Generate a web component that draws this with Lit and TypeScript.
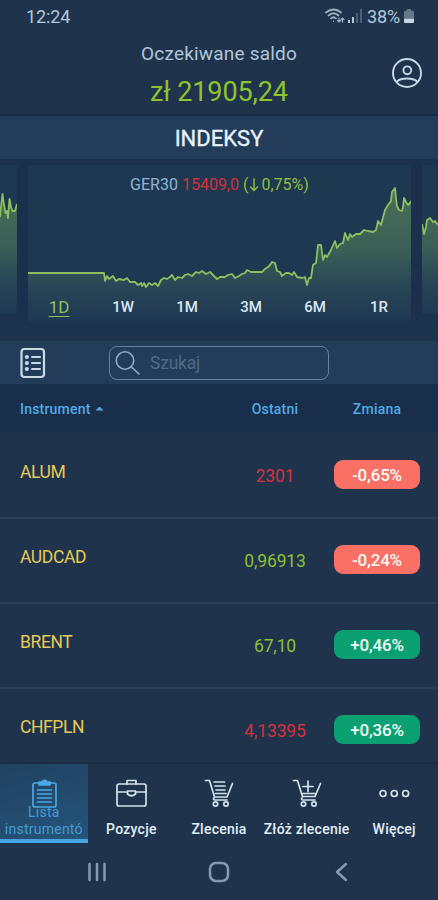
import { LitElement, html, css, svg } from "lit";
import { customElement } from "lit/decorators.js";
import { classMap } from "lit/directives/class-map.js";

interface Quote { name: string; last: string; rising: boolean; change: string; up: boolean; }

const QUOTES: Quote[] = [
  { name: "ALUM", last: "2301", rising: false, change: "-0,65%", up: false },
  { name: "AUDCAD", last: "0,96913", rising: true, change: "-0,24%", up: false },
  { name: "BRENT", last: "67,10", rising: true, change: "+0,46%", up: true },
  { name: "CHFPLN", last: "4,13395", rising: false, change: "+0,36%", up: true },
];

const PERIODS = ["1D", "1W", "1M", "3M", "6M", "1R"];

const LEFT_LINE = "0,52 1,42 2.5,29 4,40 5.500,48 7,46 8,53 9.5,34 11,42 12.500,46 15,46 17,39";
const MAIN_LINE =
  "0,108 76,108 77,116 79,111 81,114 85,111 88,116 91,114 96,115 99,113 102,117 107,117 110,120 113,118 114,121 116,118 118,122 121,118 124,120 127,118 130,121 133,115 136,113 139,114 142,112 144,110 147,115 150,112 154,113 157,110 160,109 164,111 168,107 171,108 174,106 178,109 182,107 186,111 189,114 192,112 197,112 200,110 204,109 207,113 211,111 214,109 217,108 219,105 223,107 228,107 234,107 237,104 240,102 242,100 244,97 247,98 249,106 252,107 254,111 258,108 261,108 264,110 266,107 269,112 274,113 277,112 279,120 281,113 283,113 285,100 288,98 290,80 293,80 295,95 297,90 299,92 303,85 307,76 309,83 312,79 315,78 317,68 320,75 322,69 324,72 328,69 332,69 336,65 340,66 345,67 348,65 350,56 353,60 357,45 360,40 363,36 364,27 367,23 368,33 369,41 371,45 374,46 375,42 376,33 378,37 380,40 382,38 383,36";
const RIGHT_LINE = "0,59 2,69 4,62 5,55 8,53 11,57 13,56 16,60";

const stroke = (body: unknown, cls: string, box: string) =>
  html`<svg class=${cls} viewBox=${box} fill="none" stroke="currentColor" stroke-linecap="round" stroke-linejoin="round">${body}</svg>`;

@customElement("area-chart")
export class AreaChart extends LitElement {
  static properties = {
    points: { type: String },
    width: { type: Number },
    height: { type: Number },
  };
  declare points: string;
  declare width: number;
  declare height: number;

  static styles = css`
    :host, svg { display: block; }
    polyline { fill: none; stroke: #8dbf60; stroke-width: 1.8; stroke-linejoin: round; }
  `;

  render() {
    const w = this.width, h = this.height;
    return html`<svg width=${w} height=${h} viewBox="0 0 ${w} ${h}">
      <defs><linearGradient id="fade" gradientUnits="userSpaceOnUse" x1="0" y1="20" x2="0" y2=${h}>
        <stop offset="0" stop-color="#79a85d" stop-opacity=".5"></stop>
        <stop offset=".5" stop-color="#5c8b5c" stop-opacity=".45"></stop>
        <stop offset="1" stop-color="#335f66" stop-opacity=".02"></stop>
      </linearGradient></defs>
      <polygon points="0,${h} ${this.points} ${w},${h}" fill="url(#fade)"></polygon>
      <polyline points=${this.points}></polyline>
    </svg>`;
  }
}

@customElement("app-root")
export class AppRoot extends LitElement {
  static styles = css`
    :host { display: flex; flex-direction: column; width: 438px; height: 900px; overflow: hidden; background: #1f344c; color: #dce9f5; font-family: Roboto, "Noto Sans", sans-serif; }
    * { box-sizing: border-box; }
    svg { display: block; flex: none; }
    .status { height: 34px; flex: none; display: flex; align-items: center; justify-content: space-between; padding: 0 23px 2px 26px; font-size: 18px; letter-spacing: -.1px; color: #b5c6d8; }
    .signals { display: flex; align-items: center; }
    .wifi { width: 20px; height: 16px; margin-right: 3px; }
    .bars { width: 14px; height: 14px; margin-right: 5px; }
    .battery { width: 12px; height: 16px; margin-left: 3px; }
    .balance { height: 82px; flex: none; display: grid; grid-template-columns: 64px 1fr 64px; border-bottom: 2px solid #182a43; }
    .sum { text-align: center; padding-top: 8px; }
    .label { font-size: 19px; line-height: 24px; color: #b1c5d9; letter-spacing: .2px; }
    .amount { font-size: 27px; line-height: 32px; margin-top: 10px; color: #8fc32d; letter-spacing: -.1px; }
    .user { width: 32px; height: 32px; margin: 23px 0 0 17px; color: #c6d7e8; stroke-width: 1.9; }
    .title { height: 43px; flex: none; display: flex; align-items: center; justify-content: center; font-size: 22px; -webkit-text-stroke: .35px; color: #e8f2fb; background: #233c5a; padding-top: 2px; }
    .carousel { height: 182px; flex: none; display: grid; grid-template-columns: 17px 383px 16px; column-gap: 11px; padding-top: 6px; background: linear-gradient(#1b304c 150px, #1e334c 176px); }
    .card { height: 156px; background: #1f3852; display: grid; }
    .side { height: 149px; }
    .card > * { grid-area: 1 / 1; }
    .info { display: flex; flex-direction: column; justify-content: space-between; padding: 10px 0 4px; }
    .quote { text-align: center; font-size: 16px; line-height: 20px; color: #8fb4d6; }
    .down { color: #d2323a; }
    .rise { color: #8ebe38; }
    .arrow { display: inline-block; width: 10px; height: 14px; vertical-align: -2px; margin: 0 2px 0 1px; stroke-width: 1.5; }
    .periods { display: grid; grid-template-columns: repeat(6, 64px); margin-left: -1px; text-align: center; font-size: 15px; line-height: 20px; font-weight: 500; color: #d7e8f4; }
    .current { color: #8cc263; font-size: 17px; font-weight: 400; text-decoration: underline; text-underline-offset: 3px; text-decoration-thickness: 1px; }
    .tools { height: 43px; flex: none; display: flex; align-items: center; gap: 63px; padding-left: 20px; background: #233c5a; }
    .list { width: 26px; height: 32px; color: #cad9e8; }
    .search { width: 220px; height: 34px; border: 1.5px solid #64809c; border-radius: 8px; display: flex; align-items: center; gap: 10px; padding-left: 5px; color: #506a86; font-size: 17.5px; letter-spacing: -.2px; }
    .lens { width: 25px; height: 26px; color: #91abc5; stroke-width: 1.6; }
    .columns, .row { display: grid; grid-template-columns: 196px 118px 86px; padding-left: 20px; padding-right: 18px; }
    .columns { height: 48px; flex: none; align-items: center; background: #192e4a; color: #50abe3; font-size: 14px; font-weight: 500; letter-spacing: .2px; text-align: center; padding-top: 1px; }
    .sorted { display: flex; align-items: center; gap: 5px; }
    .tri { width: 8px; height: 4px; background: currentColor; clip-path: polygon(50% 0, 100% 100%, 0 100%); }
    .rows { height: 330px; flex: none; overflow: hidden; }
    .row { height: 85px; border-bottom: 2px solid #2a415a; align-items: start; text-align: center; font-size: 17.5px; line-height: 24px; padding-top: 26px; }
    .row:first-child { height: 87px; padding-top: 28px; }
    .name { color: #e5c957; text-align: left; letter-spacing: -.4px; }
    .last { padding-top: 4px; letter-spacing: -.15px; }
    .pill { height: 29px; line-height: 30px; border-radius: 9px; color: #f2fbf8; background: #0ba071; font-weight: 500; font-size: 17px; letter-spacing: -.2px; }
    .loss { background: #fb7064; }
    .nav { height: 81px; flex: none; display: grid; grid-template-columns: repeat(5, 1fr); border-top: 2px solid #192c44; }
    .tab { display: flex; flex-direction: column; align-items: center; justify-content: space-between; padding: 15px 0 5px; white-space: nowrap; text-align: center; font-size: 14px; letter-spacing: .25px; font-weight: 500; line-height: 17px; color: #e2eef8; }
    .tab svg { width: 32px; height: 30px; color: #d4e2ed; stroke-width: 1.7; }
    .active { background: linear-gradient(160deg, #21425f, #25547c); border-bottom: 4px solid #48a4df; padding-bottom: 1px; color: #459bd3; font-weight: 400; }
    .tab.active svg { color: #4ba7e3; margin-bottom: -6px; }
    .system { flex: 1; display: flex; justify-content: center; padding-top: 18px; gap: 100px; color: #8999b0; }
    .system svg { width: 22px; height: 22px; stroke-width: 2.5; }
  `;

  render() {
    return html`
      <div class="status"><span>12:24</span>
        <div class="signals">
          <svg class="wifi" viewBox="0 0 20 16" fill="none" stroke="#9fb2c5" stroke-width="1.7" stroke-linecap="round"><path d="M1 4.500Q8.500-1.500 16 4.500M3.500 7.500Q8.500 3 13.500 7.500M6 10.500Q8.500 8 11 10.500"></path><path d="M8.500 13v.5M14 10v4m-1.500-1.500L14 14l1.500-1.500M17.500 14v-4M16 11.500l1.500-1.500 1.500 1.500" stroke-width="1.200"></path></svg>
          <svg class="bars" viewBox="0 0 14 14"><path d="M0 11h2v3H0zM4 8h2v6H4z" fill="#b5c6d8"></path><path d="M8 4h2v10H8zM12 0h2v14h-2z" fill="#4a6077"></path></svg>
          <span>38%</span>
          <svg class="battery" viewBox="0 0 12 16"><path d="M1 4.500Q1 2.500 3 2.500H4V1H8V2.500H9Q11 2.500 11 4.500V10H1z" fill="#65798d"></path><path d="M1 10.500h10V14q0 1-1 1H2q-1 0-1-1z" fill="#c9d6e1"></path></svg>
        </div>
      </div>
      <div class="balance"><span></span>
        <div class="sum"><div class="label">Oczekiwane saldo</div><div class="amount">zł 21905,24</div></div>
        ${stroke(svg`<circle cx="16" cy="16" r="14"></circle><circle cx="16.300" cy="13.300" r="3.900"></circle><path d="M6 24.500Q9 21.500 16 21.500T26 24.500"></path>`, "user", "0 0 32 32")}
      </div>
      <div class="title">INDEKSY</div>
      <div class="carousel">
        <div class="card side"><area-chart points=${LEFT_LINE} width="17" height="149"></area-chart></div>
        <div class="card"><area-chart points=${MAIN_LINE} width="383" height="156"></area-chart>
          <div class="info">
            <div class="quote">GER30 <span class="down">15409,0</span> <span class="rise">(${stroke(svg`<path d="M5 1v11M1.500 9l3.500 3.500 3.500-3.500"></path>`, "arrow", "0 0 10 14")}0,75%)</span></div>
            <div class="periods">${PERIODS.map((p, i) => html`<span class=${classMap({ current: i === 0 })}>${p}</span>`)}</div>
          </div>
        </div>
        <div class="card side"><area-chart points=${RIGHT_LINE} width="16" height="149"></area-chart></div>
      </div>
      <div class="tools">
        ${stroke(svg`<rect x="1.500" y="2" width="22.500" height="28" rx="3" stroke-width="2.200"></rect><path d="M12 10h8M12 16h8M12 22h8" stroke-width="2"></path><path d="M6.800 10h.1M6.800 16h.1M6.800 22h.1" stroke-width="4"></path>`, "list", "0 0 26 32")}
        <div class="search">${stroke(svg`<circle cx="10" cy="10.500" r="8.700"></circle><path d="M16.500 17 24 24"></path>`, "lens", "0 0 25 26")}<span>Szukaj</span></div>
      </div>
      <div class="columns"><span class="sorted">Instrument<i class="tri"></i></span><span>Ostatni</span><span>Zmiana</span></div>
      <div class="rows">${QUOTES.map(q => html`<div class="row">
        <span class="name">${q.name}</span>
        <span class=${classMap({ last: true, rise: q.rising, down: !q.rising })}>${q.last}</span>
        <span class=${classMap({ pill: true, loss: !q.up })}>${q.change}</span>
      </div>`)}</div>
      <div class="nav">
        <div class="tab active">${stroke(svg`<path d="M11 4H7Q5 4 5 6V26Q5 28 7 28H26Q28 28 28 26V6Q28 4 26 4H22"></path><path d="M11 6V3H14Q14.500 1 16.500 1T19 3H22V6Z" fill="currentColor"></path><path d="M9.500 11H23.500M9.500 15H23.500M9.500 19H23.500M9.500 23H23.500"></path>`, "", "0 0 32 30")}<span>Lista<br>instrumentó</span></div>
        <div class="tab">${stroke(svg`<rect x="2" y="5" width="29" height="22" rx="2"></rect><path d="M12 5V1.500H21V5M2 13H12.500M20.500 13H31M12.500 12H20.500V15Q16.500 18.500 12.500 15Z"></path>`, "", "0 0 32 30")}<span>Pozycje</span></div>
        <div class="tab">${stroke(svg`<path d="M2.500 1.500H6.500L11.500 18H24L29.500 4.500M11 3H21.500M12 7H22M13 11H22M12.500 14.500H23M11.500 18Q9 21 12.500 21H24"></path><circle cx="12.500" cy="25" r="2.200"></circle><circle cx="23" cy="25" r="2.200"></circle>`, "", "0 0 32 30")}<span>Zlecenia</span></div>
        <div class="tab">${stroke(svg`<path d="M2.500 1.500H6.500L11.500 17.500H24L29.500 4.500M17 2V12.500M12 7.500H22M12 14.500H24M11.500 18Q9 21 12.500 21H24"></path><circle cx="12.500" cy="25" r="2.200"></circle><circle cx="23" cy="25" r="2.200"></circle>`, "", "0 0 32 30")}<span>Złóż zlecenie</span></div>
        <div class="tab">${stroke(svg`<circle cx="5" cy="14.500" r="3"></circle><circle cx="16.300" cy="14.500" r="3"></circle><circle cx="27.600" cy="14.500" r="3"></circle>`, "", "0 0 32 30")}<span>Więcej</span></div>
      </div>
      <div class="system">
        ${stroke(svg`<path d="M3.500 3V19M11 3V19M18.500 3V19"></path>`, "", "0 0 22 22")}
        ${stroke(svg`<rect x="2" y="2" width="18" height="18" rx="6"></rect>`, "", "0 0 22 22")}
        ${stroke(svg`<path d="M16 3 7 11 16 19"></path>`, "", "0 0 22 22")}
      </div>`;
  }
}
